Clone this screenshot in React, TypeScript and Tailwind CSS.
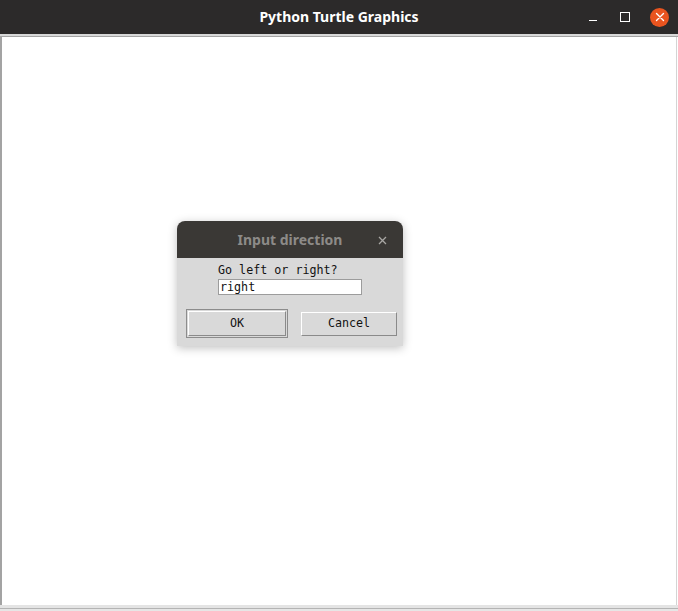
import React from "react";

export default function App() {
  return (
    <div className="relative w-[678px] h-[611px] flex flex-col bg-[#e3e3e3] overflow-hidden">
      {/* Title bar */}
      <div className="relative h-[34px] bg-[#2c2a2a] flex items-center justify-center shrink-0">
        <span
          className="text-white text-[14px] font-bold leading-none"
          style={{ fontFamily: '"Noto Sans", "Open Sans", sans-serif' }}
        >
          Python Turtle Graphics
        </span>
        <div className="absolute right-[9px] top-0 h-[34px] flex items-center">
          <div className="w-[14px] h-[14px] flex items-end justify-center mr-[20px]">
            <div className="w-[8px] h-[1.5px] bg-white mb-[3px]" />
          </div>
          <div className="w-[10px] h-[10px] border-[1.5px] border-white mr-[20px]" />
          <div className="w-[19px] h-[19px] rounded-full bg-[#e9541f] flex items-center justify-center">
            <svg width="10" height="10" viewBox="0 0 10 10">
              <path d="M1.5 1.5 L8.5 8.5 M8.5 1.5 L1.5 8.5" stroke="white" strokeWidth="1.4" strokeLinecap="round" />
            </svg>
          </div>
        </div>
      </div>
      <div className="h-[2px] bg-[#d8d8d8] shrink-0" />
      <div className="h-[1px] bg-[#a3a3a3] shrink-0" />
      {/* Canvas */}
      <div className="flex-1 flex">
        <div className="w-[2px] bg-[#a3a3a3]" />
        <div className="flex-1 bg-white" />
        <div className="w-[1px] bg-[#d4d4d4]" />
        <div className="w-[1px] bg-white" />
      </div>
      <div className="h-[3px] bg-[#e4e4e4] shrink-0" />
      <div className="h-[1px] bg-[#b4b4b4] shrink-0" />
      <div className="h-[2px] bg-[#e6e6e6] shrink-0" />

      {/* Dialog */}
      <div className="absolute left-[177px] top-[221px] w-[226px] h-[125px] rounded-t-[8px] overflow-hidden flex flex-col shadow-[0_2px_10px_rgba(0,0,0,0.25)]">
        <div className="relative h-[37px] bg-[#3a3835] flex items-center justify-center shrink-0">
          <span
            className="text-[#8d8b88] text-[14px] font-bold leading-none"
            style={{ fontFamily: '"Noto Sans", "Open Sans", sans-serif' }}
          >
            Input direction
          </span>
          <svg className="absolute left-[201px] top-[15px]" width="9" height="9" viewBox="0 0 9 9">
            <path d="M1 1 L8 8 M8 1 L1 8" stroke="#a9a7a4" strokeWidth="1.3" />
          </svg>
        </div>
        <div
          className="flex-1 bg-[#d9d9d9] flex flex-col text-[11.7px] text-[#111]"
          style={{ fontFamily: '"DejaVu Sans Mono", "Liberation Mono", monospace' }}
        >
          <div className="pl-[41px] pt-[5px] leading-[15px]">Go left or right?</div>
          <div className="ml-[41px] mt-[1px] w-[144px] h-[16px] bg-white border border-[#9c9c9c] leading-[14px] pl-[1px]">
            right
          </div>
          <div className="flex items-center mt-[14px] pl-[9px]">
            <div className="w-[102px] h-[29px] border border-[#8c8c8c] p-[1px]">
              <div className="w-full h-full border border-t-white border-l-white border-b-[#8a8a8a] border-r-[#8a8a8a] flex items-center justify-center">
                OK
              </div>
            </div>
            <div className="ml-[13px] w-[96px] h-[24px] border border-t-white border-l-white border-b-[#8a8a8a] border-r-[#8a8a8a] flex items-center justify-center">
              Cancel
            </div>
          </div>
        </div>
      </div>
    </div>
  );
}
